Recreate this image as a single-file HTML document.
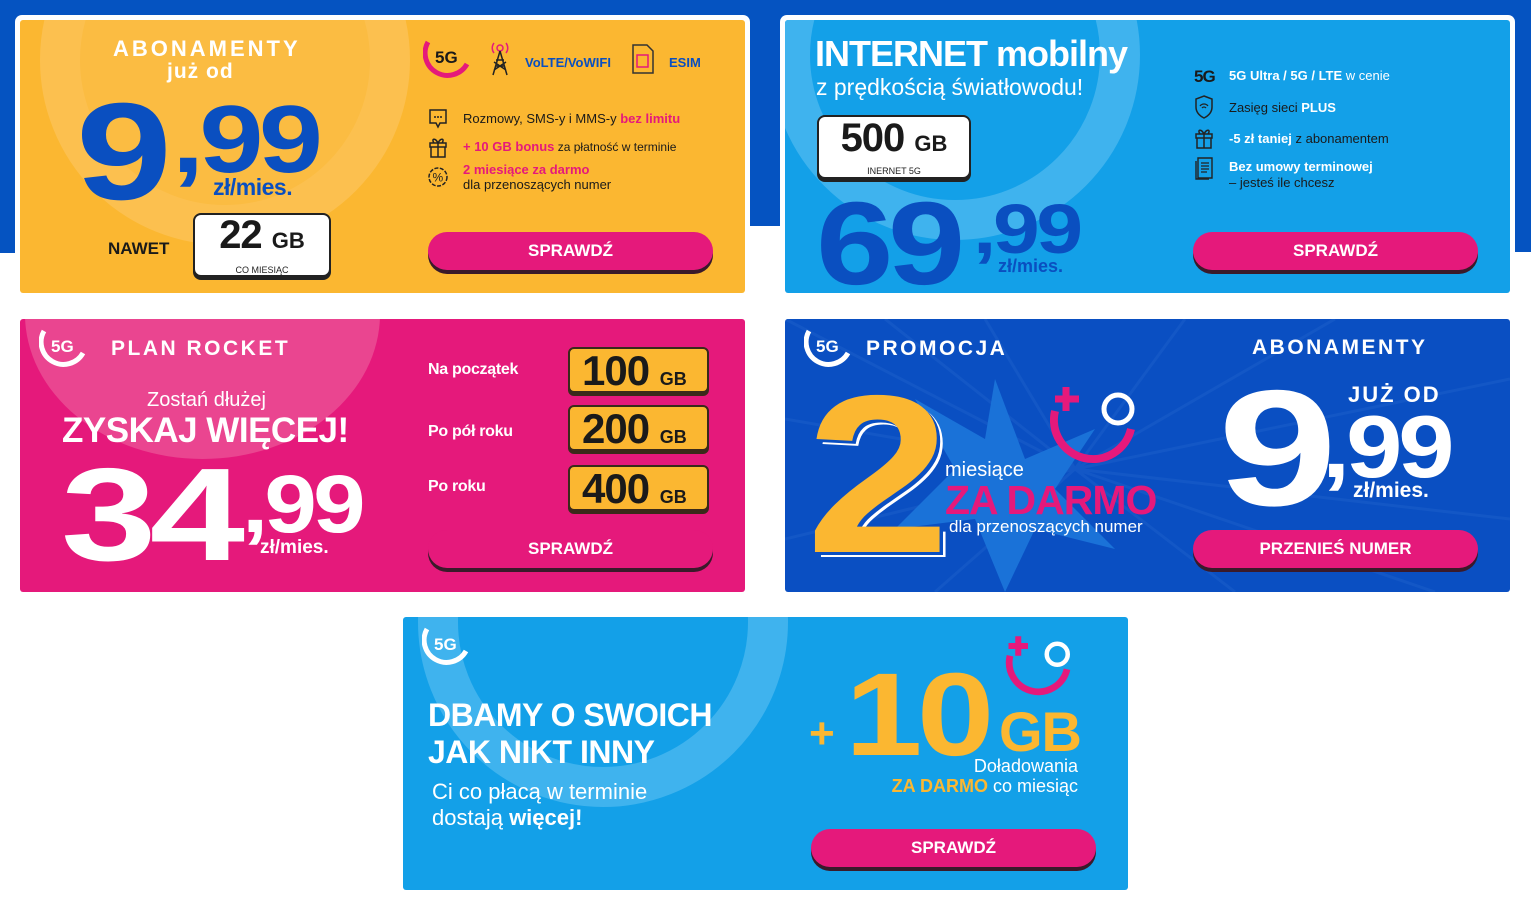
<!DOCTYPE html>
<html><head><meta charset="utf-8">
<style>
*{margin:0;padding:0;box-sizing:border-box}
body{width:1531px;height:919px;position:relative;background:#fff;font-family:"Liberation Sans",sans-serif;overflow:hidden}
.a{position:absolute;white-space:nowrap}
.card{position:absolute;width:725px;height:273px;overflow:hidden;border-radius:3px}
.b{font-weight:bold}
.btn{position:absolute;width:285px;height:38px;border-radius:19px;background:#e5197b;box-shadow:0 4px 0 #3a1a2a;color:#fff;font-weight:bold;font-size:17px;text-align:center;line-height:38px}
.big{font-weight:bold;letter-spacing:-0.04em;line-height:1;transform-origin:0 0}
.ring{position:absolute;border-radius:50%}
.lbl{color:#fff;font-weight:bold;font-size:16px;letter-spacing:-0.3px}
.ybox{position:absolute;width:141px;height:46px;background:#fbb731;border:2px solid #3a2a1a;border-radius:6px;box-shadow:0 3px 0 #3a2a1a;color:#1a1a1a;font-weight:bold;font-size:42px;line-height:44px;padding-left:12px;letter-spacing:-1px}
.ybox span{font-size:18px;letter-spacing:0}
</style></head><body>
<div class="a" style="left:0;top:0;width:1531px;height:226px;background:#0553c1"></div>
<div class="a" style="left:0;top:0;width:20px;height:253px;background:#0553c1"></div>
<div class="a" style="left:1510px;top:0;width:21px;height:252px;background:#0553c1"></div>
<div class="a" style="left:15px;top:15px;width:735px;height:283px;background:#fff;border-radius:7px"></div>
<div class="a" style="left:780px;top:15px;width:735px;height:283px;background:#fff;border-radius:7px"></div>

<!-- CARD 1 -->
<div class="card" style="left:20px;top:20px;background:#fbb731">
 <div class="ring" style="left:20px;top:-145px;width:370px;height:370px;border:40px solid #fcc04f;background:#fbbc42"></div>
 <div class="a b" style="left:93px;top:16px;font-size:22px;color:#fff;letter-spacing:3px">ABONAMENTY</div>
 <div class="a b" style="left:147px;top:40px;font-size:21px;color:#fff;letter-spacing:1px">już od</div>
 <div class="a big" style="left:56px;top:63px;font-size:138px;color:#0a4fc0;transform:scaleX(1.25)">9</div>
 <div class="a big" style="left:152px;top:72px;font-size:96px;color:#0a4fc0;transform:scaleX(1.2)">,99</div>
 <div class="a b" style="left:193px;top:154px;font-size:23px;color:#0a4fc0;letter-spacing:-0.5px">zł/mies.</div>
 <div class="a b" style="left:88px;top:219px;font-size:17px;color:#1a1a1a">NAWET</div>
 <div class="a" style="left:173px;top:193px;width:138px;height:64px;background:#fff;border:2px solid #222;border-radius:8px;box-shadow:0 3px 0 #222;text-align:center">
  <div class="b" style="font-size:40px;line-height:40px;color:#1a1a1a;letter-spacing:-1px">22 <span style="font-size:22px;letter-spacing:0">GB</span></div>
  <div style="font-size:9px;color:#222;margin-top:4px">CO MIESIĄC</div>
 </div>
 <svg class="a" style="left:403px;top:18px" width="50" height="40" viewBox="0 0 50 40"><path d="M5 4 A18 18 0 0 0 44 26" fill="none" stroke="#e5197b" stroke-width="5"/><text x="12" y="25" font-family="Liberation Sans" font-weight="bold" font-size="17" fill="#1a1a1a">5G</text></svg>
 <svg class="a" style="left:466px;top:20px" width="28" height="36" viewBox="0 0 28 36"><g fill="none" stroke="#222" stroke-width="1.5"><circle cx="14" cy="8" r="3" stroke="#e5197b"/><path d="M8 3a8 8 0 0 0 0 10M20 3a8 8 0 0 1 0 10" stroke="#e5197b"/><path d="M14 11 L7 35 M14 11 L21 35 M9 26 H19 M10 20 H18 M8 30 L20 22 M20 30 L8 22"/></g></svg>
 <div class="a b" style="left:505px;top:35px;font-size:13px;color:#0a4fc0">VoLTE/VoWIFI</div>
 <svg class="a" style="left:611px;top:23px" width="24" height="32" viewBox="0 0 24 32"><path d="M2 2h14l6 6v22H2z" fill="none" stroke="#333" stroke-width="1.5"/><rect x="6" y="12" width="11" height="12" fill="none" stroke="#e5197b" stroke-width="1.5"/></svg>
 <div class="a b" style="left:649px;top:35px;font-size:13px;color:#0a4fc0">ESIM</div>
 <svg class="a" style="left:408px;top:88px" width="20" height="22" viewBox="0 0 20 22"><path d="M2 2h16v13h-6l-2 4-2-4H2z" fill="none" stroke="#222" stroke-width="1.5"/><circle cx="7" cy="9" r="1" fill="#222"/><circle cx="10" cy="9" r="1" fill="#222"/><circle cx="13" cy="9" r="1" fill="#222"/></svg>
 <div class="a" style="left:443px;top:91px;font-size:13px;color:#1a1a1a">Rozmowy, SMS-y i MMS-y <b style="color:#e5197b">bez limitu</b></div>
 <svg class="a" style="left:408px;top:116px" width="20" height="22" viewBox="0 0 20 22"><path d="M2 7h16v4H2zM3 11h14v10H3zM10 7v14M10 7C7 1 3 3 6 7M10 7c3-6 7-4 4 0" fill="none" stroke="#222" stroke-width="1.5"/></svg>
 <div class="a" style="left:443px;top:119px;font-size:12px;color:#1a1a1a"><b style="color:#e5197b;font-size:13px">+ 10 GB bonus</b> za płatność w terminie</div>
 <svg class="a" style="left:407px;top:146px" width="22" height="22" viewBox="0 0 22 22"><circle cx="11" cy="11" r="9" fill="none" stroke="#222" stroke-width="1.5" stroke-dasharray="4 1.5"/><text x="5.5" y="15.5" font-family="Liberation Sans" font-size="12" fill="#222">%</text></svg>
 <div class="a b" style="left:443px;top:142px;font-size:13px;color:#e5197b">2 miesiące za darmo</div>
 <div class="a" style="left:443px;top:157px;font-size:13px;color:#1a1a1a">dla przenoszących numer</div>
 <div class="btn" style="left:408px;top:212px">SPRAWDŹ</div>
</div>

<!-- CARD 2 -->
<div class="card" style="left:785px;top:20px;background:#13a0e8">
 <div class="ring" style="left:-15px;top:-150px;width:370px;height:370px;border:40px solid #3fb3ee"></div>
 <div class="a b" style="left:30px;top:13px;font-size:36px;color:#fff;letter-spacing:-1px">INTERNET mobilny</div>
 <div class="a" style="left:31px;top:54px;font-size:23px;color:#fff">z prędkością światłowodu!</div>
 <div class="a" style="left:32px;top:95px;width:154px;height:64px;background:#fff;border:2px solid #222;border-radius:8px;box-shadow:0 3px 0 #222;text-align:center">
  <div class="b" style="font-size:40px;line-height:42px;color:#1a1a1a;letter-spacing:-1px">500 <span style="font-size:22px;letter-spacing:0">GB</span></div>
  <div style="font-size:9px;color:#222;margin-top:1px">INERNET 5G</div>
 </div>
 <div class="a big" style="left:31px;top:165px;font-size:118px;color:#0a4fc0;transform:scaleX(1.18)">69</div>
 <div class="a big" style="left:188px;top:174px;font-size:70px;color:#0a4fc0;transform:scaleX(1.2)">,99</div>
 <div class="a b" style="left:213px;top:236px;font-size:18px;color:#0a4fc0">zł/mies.</div>
 <div class="a b" style="left:409px;top:47px;font-size:17px;color:#1a1a1a;letter-spacing:-1px">5G</div>
 <div class="a" style="left:444px;top:48px;font-size:13px;color:#fff"><b>5G Ultra / 5G / LTE</b> w cenie</div>
 <svg class="a" style="left:409px;top:75px" width="20" height="24" viewBox="0 0 20 24"><path d="M10 1L18 4v8c0 6-4 9-8 11C6 21 2 18 2 12V4z" fill="none" stroke="#222" stroke-width="1.5"/><path d="M6 11a5 5 0 0 1 8 0M8 13a2.5 2.5 0 0 1 4 0" fill="none" stroke="#222" stroke-width="1.3"/></svg>
 <div class="a" style="left:444px;top:80px;font-size:13px;color:#1a1a1a">Zasięg sieci <b style="color:#fff">PLUS</b></div>
 <svg class="a" style="left:409px;top:107px" width="20" height="22" viewBox="0 0 20 22"><path d="M2 7h16v4H2zM3 11h14v10H3zM10 7v14M10 7C7 1 3 3 6 7M10 7c3-6 7-4 4 0" fill="none" stroke="#222" stroke-width="1.5"/></svg>
 <div class="a" style="left:444px;top:111px;font-size:13px;color:#1a1a1a"><b style="color:#fff">-5 zł taniej</b> z abonamentem</div>
 <svg class="a" style="left:409px;top:136px" width="20" height="24" viewBox="0 0 20 24"><path d="M4 2h14v20H4zM2 5v18h13" fill="none" stroke="#222" stroke-width="1.4"/><path d="M7 7h8M7 10h8M7 13h8M7 16h6" stroke="#222" stroke-width="1.2"/></svg>
 <div class="a b" style="left:444px;top:139px;font-size:13px;color:#fff">Bez umowy terminowej</div>
 <div class="a" style="left:444px;top:155px;font-size:13px;color:#1a1a1a">– jesteś ile chcesz</div>
 <div class="btn" style="left:408px;top:212px">SPRAWDŹ</div>
</div>

<!-- CARD 3 -->
<div class="card" style="left:20px;top:319px;background:#e5197b">
 <div class="ring" style="left:5px;top:-150px;width:355px;height:290px;border-radius:50%;background:#ea4590"></div>
 <svg class="a" style="left:19px;top:8px" width="50" height="40" viewBox="0 0 50 40"><path d="M5 4 A18 18 0 0 0 44 26" fill="none" stroke="#fff" stroke-width="5"/><text x="12" y="25" font-family="Liberation Sans" font-weight="bold" font-size="17" fill="#fff">5G</text></svg>
 <div class="a b" style="left:91px;top:18px;font-size:21px;color:#fff;letter-spacing:2.5px">PLAN ROCKET</div>
 <div class="a" style="left:127px;top:70px;font-size:20px;color:#fff">Zostań dłużej</div>
 <div class="a b" style="left:42px;top:92px;font-size:35px;color:#fff;letter-spacing:-0.5px">ZYSKAJ WIĘCEJ!</div>
 <div class="a big" style="left:41px;top:130px;font-size:132px;color:#fff;transform:scaleX(1.3)">34</div>
 <div class="a big" style="left:222px;top:145px;font-size:82px;color:#fff;transform:scaleX(1.15)">,99</div>
 <div class="a b" style="left:240px;top:218px;font-size:19px;color:#fff">zł/mies.</div>
 <div class="a lbl" style="left:408px;top:42px">Na początek</div>
 <div class="a lbl" style="left:408px;top:104px">Po pół roku</div>
 <div class="a lbl" style="left:408px;top:159px">Po roku</div>
 <div class="ybox" style="left:548px;top:28px">100 <span>GB</span></div>
 <div class="ybox" style="left:548px;top:86px">200 <span>GB</span></div>
 <div class="ybox" style="left:548px;top:146px">400 <span>GB</span></div>
 <div class="btn" style="left:408px;top:211px">SPRAWDŹ</div>
</div>

<!-- CARD 4 -->
<div class="card" style="left:785px;top:319px;background:#0a4fc2">
 <svg class="a" style="left:0;top:0" width="725" height="273" viewBox="0 0 725 273">
  <g stroke="#1357c6" stroke-width="3">
   <path d="M290 150L0 0M290 150L100 0M290 150L200 0M290 150L400 0M290 150L550 0M290 150L725 60M290 150L725 200M290 150L650 273M290 150L450 273M290 150L150 273M290 150L0 220M290 150L0 100"/>
  </g>
  <polygon points="210,60 240,140 310,110 270,170 330,230 250,210 220,273 190,200 110,210 170,150 130,80 200,120" fill="#1a72d8"/>
 </svg>
 <svg class="a" style="left:19px;top:8px" width="50" height="40" viewBox="0 0 50 40"><path d="M5 4 A18 18 0 0 0 44 26" fill="none" stroke="#fff" stroke-width="5"/><text x="12" y="25" font-family="Liberation Sans" font-weight="bold" font-size="17" fill="#fff">5G</text></svg>
 <div class="a b" style="left:81px;top:18px;font-size:21px;color:#fff;letter-spacing:2.5px">PROMOCJA</div>
 <div class="a b" style="left:467px;top:17px;font-size:21px;color:#fff;letter-spacing:2.5px">ABONAMENTY</div>
 <div class="a big" style="left:27px;top:48px;font-size:225px;color:#fff;transform:scaleX(1.15)">2</div>
 <div class="a big" style="left:21px;top:43px;font-size:225px;color:#fbb731;transform:scaleX(1.15);text-shadow:3px 3px 0 #0a4fc2">2</div>
 <div class="a" style="left:160px;top:140px;font-size:20px;color:#fff">miesiące</div>
 <div class="a b" style="left:160px;top:158px;font-size:41px;color:#e5197b;letter-spacing:-1px">ZA DARMO</div>
 <div class="a" style="left:164px;top:198px;font-size:17px;color:#fff">dla przenoszących numer</div>
 <svg class="a" style="left:258px;top:62px" width="100" height="90" viewBox="0 0 100 90"><path d="M12 30 A38 38 0 0 0 88 48" fill="none" stroke="#e5197b" stroke-width="8"/><path d="M23 6v24M12 18h24" stroke="#e5197b" stroke-width="7"/><circle cx="75" cy="28" r="14" fill="none" stroke="#fff" stroke-width="5"/></svg>
 <div class="a big" style="left:433px;top:47px;font-size:165px;color:#fff;transform:scaleX(1.3)">9</div>
 <div class="a b" style="left:563px;top:63px;font-size:22px;color:#fff;letter-spacing:2px">JUŻ OD</div>
 <div class="a big" style="left:537px;top:84px;font-size:88px;color:#fff;transform:scaleX(1.15)">,99</div>
 <div class="a b" style="left:568px;top:160px;font-size:21px;color:#fff">zł/mies.</div>
 <div class="btn" style="left:408px;top:211px">PRZENIEŚ NUMER</div>
</div>

<!-- CARD 5 -->
<div class="card" style="left:403px;top:617px;background:#13a0e8">
 <div class="ring" style="left:15px;top:-180px;width:370px;height:370px;border:40px solid #3fb3ee"></div>
 <svg class="a" style="left:19px;top:8px" width="50" height="40" viewBox="0 0 50 40"><path d="M5 4 A18 18 0 0 0 44 26" fill="none" stroke="#fff" stroke-width="5"/><text x="12" y="25" font-family="Liberation Sans" font-weight="bold" font-size="17" fill="#fff">5G</text></svg>
 <div class="a b" style="left:25px;top:80px;font-size:32px;color:#fff;letter-spacing:-0.5px;line-height:37px">DBAMY O SWOICH<br>JAK NIKT INNY</div>
 <div class="a" style="left:29px;top:162px;font-size:22px;color:#fff;line-height:26px">Ci co płacą w terminie<br>dostają <b>więcej!</b></div>
 <div class="a b" style="left:406px;top:92px;font-size:44px;color:#fbb731">+</div>
 <div class="a big" style="left:442px;top:39px;font-size:118px;color:#fbb731;transform:scaleX(1.18)">10</div>
 <div class="a b" style="left:596px;top:82px;font-size:56px;color:#fbb731;letter-spacing:-1px">GB</div>
 <svg class="a" style="left:598px;top:15px" width="75" height="70" viewBox="0 0 100 90"><path d="M12 30 A38 38 0 0 0 88 48" fill="none" stroke="#e5197b" stroke-width="9"/><path d="M23 4v26M10 17h26" stroke="#e5197b" stroke-width="8"/><circle cx="75" cy="28" r="14" fill="none" stroke="#fff" stroke-width="6"/></svg>
 <div class="a" style="right:50px;top:139px;font-size:18px;color:#fff">Doładowania</div>
 <div class="a" style="right:50px;top:159px;font-size:18px;color:#fff"><b style="color:#fbb731">ZA DARMO</b> co miesiąc</div>
 <div class="btn" style="left:408px;top:212px">SPRAWDŹ</div>
</div>
</body></html>
